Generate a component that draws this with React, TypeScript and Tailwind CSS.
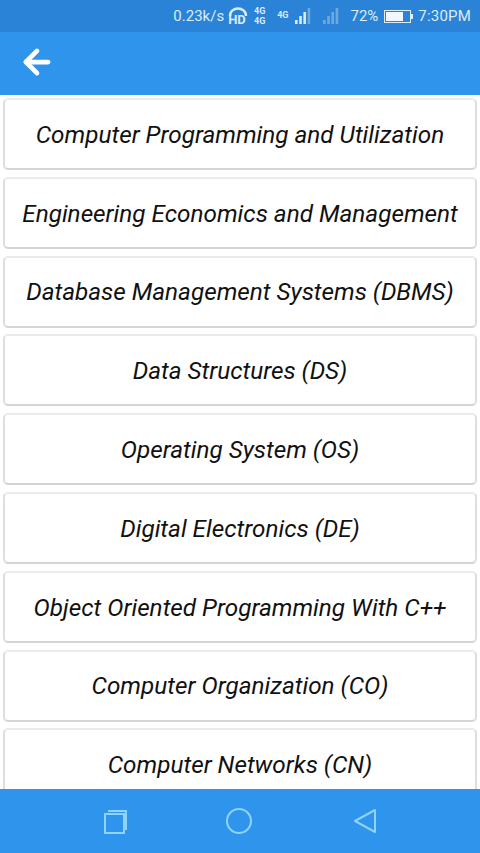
import React from 'react';
import { ArrowLeft } from 'lucide-react';

const subjects = [
  'Computer Programming and Utilization',
  'Engineering Economics and Management',
  'Database Management Systems (DBMS)',
  'Data Structures (DS)',
  'Operating System (OS)',
  'Digital Electronics (DE)',
  'Object Oriented Programming With C++',
  'Computer Organization (CO)',
  'Computer Networks (CN)',
];

const SignalBars = ({ on }: { on: number }) => (
  <svg width="18" height="18" viewBox="0 0 18 18" className="shrink-0">
    {[0, 1, 2, 3].map((i) => (
      <rect
        key={i}
        x={1 + i * 4.2}
        y={13 - i * 4}
        width="2.6"
        height={4 + i * 4}
        fill={i < on ? '#dbeafe' : '#6fa9dc'}
      />
    ))}
  </svg>
);

const StatusBar = () => (
  <div className="h-8 shrink-0 bg-[#2a83d6] flex items-center justify-end pr-[9px] text-[#dcecfb] text-[15px] font-['Roboto',sans-serif]">
    <span>0.23k/s</span>
    <span className="relative w-[21px] h-5 ml-[4px]">
      <svg width="20" height="10" viewBox="0 0 20 10" className="absolute left-0 top-[0px]">
        <path d="M2 10 C2 0 18 0 18 10" fill="none" stroke="#dcecfb" strokeWidth="2.4" />
      </svg>
      <span className="absolute left-0 top-[7px] text-[13px] leading-[14px] font-bold">HD</span>
    </span>
    <span className="ml-[4px] w-[13px] text-[9px] leading-[10px] font-bold text-center">
      4G
      <br />
      4G
    </span>
    <span className="ml-[11px] text-[9px] font-bold">4G</span>
    <span className="ml-[6px]">
      <SignalBars on={3} />
    </span>
    <span className="ml-[10px]">
      <SignalBars on={0} />
    </span>
    <span className="ml-[10px]">72%</span>
    <span className="ml-[6px] flex items-center">
      <span className="w-[27px] h-[13px] border border-[#dcecfb] p-[1px] flex">
        <span className="w-[72%] bg-[#f1f7fd]" />
      </span>
      <span className="w-[2px] h-[5px] bg-[#dcecfb]" />
    </span>
    <span className="ml-[5px] tracking-[0.2px]">7:30PM</span>
  </div>
);

const App: React.FC = () => {
  return (
    <div className="h-[853px] w-[480px] flex flex-col overflow-hidden bg-white font-['Roboto',sans-serif]">
      <StatusBar />
      <div className="h-[63px] shrink-0 bg-[#2f94ec] flex items-center pl-[18px] pb-[3px]">
        <ArrowLeft className="w-[38px] h-[38px] text-white" strokeWidth={3} />
      </div>
      <div className="flex-1 min-h-0 overflow-hidden pt-[3px] px-[3px] flex flex-col gap-[6.8px]">
        {subjects.map((name) => (
          <div
            key={name}
            className="h-[72px] shrink-0 rounded-[5px] border-2 border-[#dedede] border-t-[#ebebeb] border-b-[#d4d4d4] bg-white flex items-center justify-center pt-[2px] italic text-[24.3px] text-[#111111] whitespace-nowrap"
          >
            {name}
          </div>
        ))}
      </div>
      <div className="h-[64px] shrink-0 bg-[#2f94ec] flex items-center">
        <svg width="480" height="64" viewBox="0 0 480 64" fill="none" stroke="#8fd3f7" strokeWidth="2">
          <rect x="105" y="25" width="19" height="19" />
          <path d="M108 22 H126 V41" />
          <circle cx="239" cy="32" r="12" />
          <path d="M375 21 V43 L355 32 Z" strokeLinejoin="round" />
        </svg>
      </div>
    </div>
  );
};

export default App;
